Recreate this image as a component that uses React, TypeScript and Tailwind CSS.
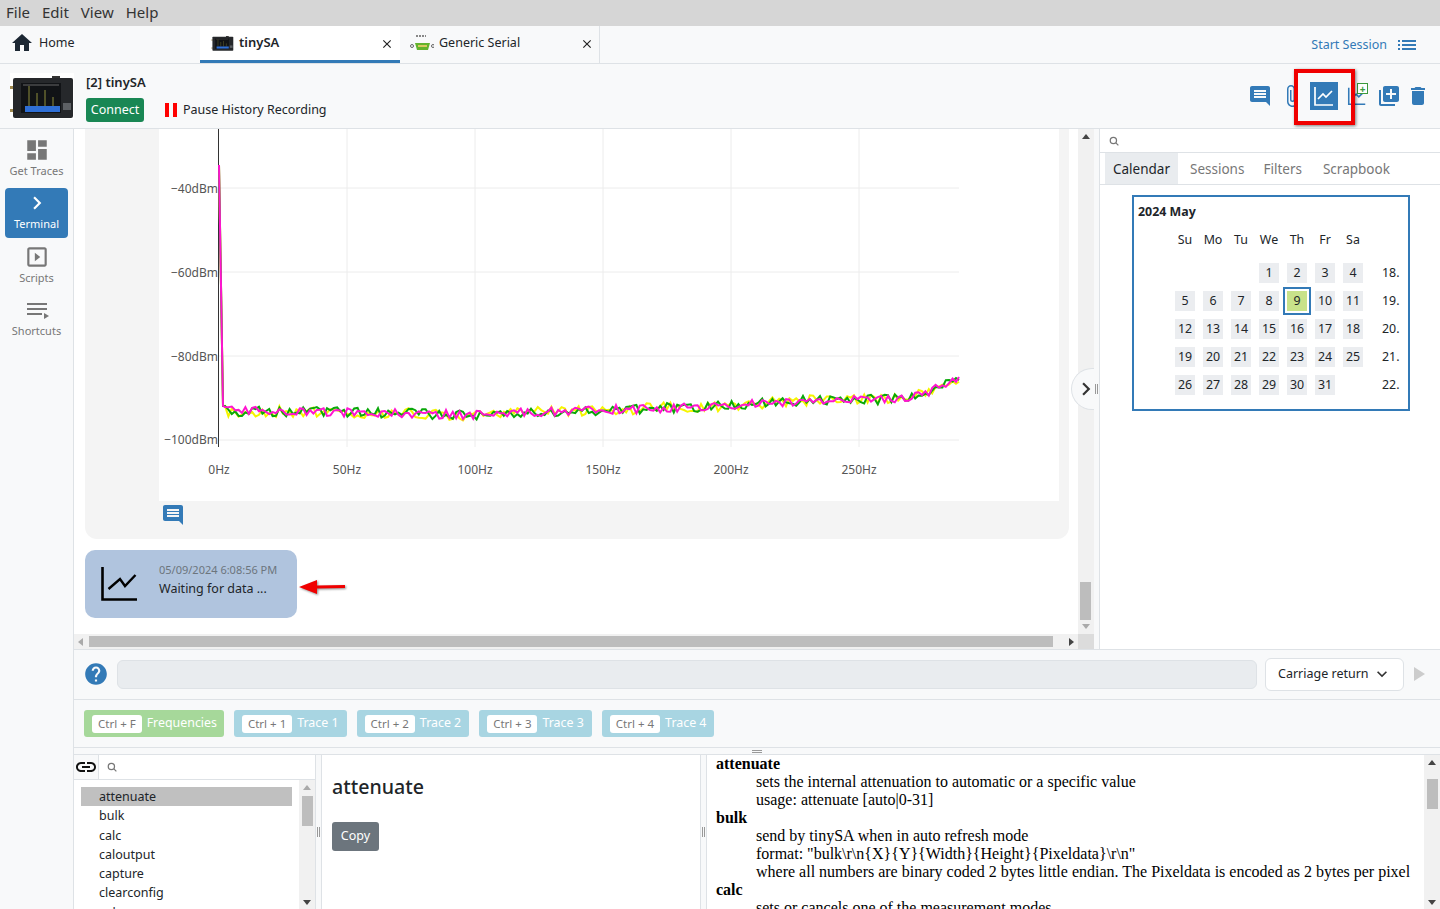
import {
  MdHome,
  MdInsertComment,
  MdAttachFile,
  MdLibraryAdd,
  MdDelete,
  MdDashboard,
  MdChevronRight,
  MdSlideshow,
  MdLink,
  MdHelp,
  MdList,
  MdKeyboardArrowDown,
  MdClose,
} from "react-icons/md";

// seeded noise so the traces come out the same on every load
const noise = (seed: number) => {
  let s = seed;
  return () => {
    s = (s * 16807) % 2147483647;
    return s / 2147483647 - 0.5;
  };
};

const baseline: [number, number][] = [
  [65, 282], [180, 283], [310, 286], [440, 281], [540, 278], [640, 272], [740, 270], [770, 263], [785, 256], [800, 251],
];

const baseAt = (x: number) => {
  for (let i = 0; i < baseline.length - 1; i++) {
    const [x0, y0] = baseline[i];
    const [x1, y1] = baseline[i + 1];
    if (x <= x1) return y0 + ((y1 - y0) * (x - x0)) / (x1 - x0);
  }
  return baseline[baseline.length - 1][1];
};

const trace = (seed: number, amp: number) => {
  const rnd = noise(seed);
  const pts: string[] = ["60,36", "64,277"];
  for (let x = 66; x <= 800; x += 3.4) {
    pts.push(`${x.toFixed(1)},${(baseAt(x) + rnd() * amp).toFixed(1)}`);
  }
  pts.push(`800,${(251 + rnd() * amp).toFixed(1)}`);
  return pts.join(" ");
};

const Device = ({ className }: { className: string }) => (
  <svg viewBox="0 0 64 46" className={className}>
    <rect x="0" y="0" width="64" height="46" fill="#fff" />
    <rect x="0" y="13" width="4" height="3" fill="#a08a50" />
    <rect x="0" y="36" width="4" height="3" fill="#a08a50" />
    <rect x="42" y="3" width="8" height="3" fill="#333" />
    <rect x="3" y="5" width="60" height="40" rx="2" fill="#26282b" />
    <rect x="11" y="10" width="40" height="30" fill="#111316" />
    <path d="M13 12h36" stroke="#666" strokeWidth="1" />
    <path d="M19 13v20M27 20v13M35 17v16M43 24v9" stroke="#8f8f3c" strokeWidth="1" />
    <rect x="15" y="33" width="35" height="6" fill="#2f6fd6" />
    <rect x="53" y="30" width="8" height="7" fill="#5d6064" />
  </svg>
);

const SerialIcon = () => (
  <svg viewBox="0 0 24 16" className="h-[16px] w-[24px]">
    <path d="M6 1h10" stroke="#888" strokeWidth="2" strokeDasharray="2 1" />
    <path d="M5 8h15l-2 7H7z" fill="#62b32c" />
    <rect x="8" y="10" width="9" height="2" fill="#d8c860" />
    <circle cx="2" cy="11" r="1.5" fill="none" stroke="#666" />
    <circle cx="23" cy="11" r="1.5" fill="none" stroke="#666" />
  </svg>
);

const ChartGlyph = ({ className, stroke }: { className: string; stroke: string }) => (
  <svg viewBox="0 0 24 24" className={className} fill="none" stroke={stroke} strokeWidth="1.7">
    <path d="M3 3v18h18" />
    <path d="M6 15l5-5 3 3 6-6" />
  </svg>
);

const ShortcutsGlyph = () => (
  <svg viewBox="0 0 26 26" className="h-[26px] w-[26px]" fill="#777">
    <rect x="3" y="6" width="20" height="2" />
    <rect x="3" y="11" width="20" height="2" />
    <rect x="3" y="16" width="15" height="2" />
    <path d="M20 16l5 3-5 3z" />
  </svg>
);

const SearchGlyph = () => (
  <svg viewBox="0 0 16 16" className="h-[10px] w-[10px]" fill="none" stroke="#777" strokeWidth="2">
    <circle cx="7" cy="7" r="5" />
    <path d="M11 11l4 4" />
  </svg>
);

const sideItems = [
  { label: "Get Traces", icon: <MdDashboard size={26} /> },
  { label: "Terminal", icon: <MdChevronRight size={26} />, active: true },
  { label: "Scripts", icon: <MdSlideshow size={26} /> },
  { label: "Shortcuts", icon: <ShortcutsGlyph /> },
];

const shortcuts = [
  { keys: "Ctrl + F", label: "Frequencies", green: true },
  { keys: "Ctrl + 1", label: "Trace 1" },
  { keys: "Ctrl + 2", label: "Trace 2" },
  { keys: "Ctrl + 3", label: "Trace 3" },
  { keys: "Ctrl + 4", label: "Trace 4" },
];

const commands = ["attenuate", "bulk", "calc", "caloutput", "capture", "clearconfig", "color"];

const weeks: { days: (number | null)[]; week: string }[] = [
  { days: [null, null, null, 1, 2, 3, 4], week: "18." },
  { days: [5, 6, 7, 8, 9, 10, 11], week: "19." },
  { days: [12, 13, 14, 15, 16, 17, 18], week: "20." },
  { days: [19, 20, 21, 22, 23, 24, 25], week: "21." },
  { days: [26, 27, 28, 29, 30, 31, null], week: "22." },
];

const Chart = () => (
  <svg width="900" height="372" className="block">
    {[59, 143, 227, 311].map((y) => (
      <line key={y} x1="60" x2="800" y1={y} y2={y} stroke="#ececec" />
    ))}
    {[188, 316, 444, 572, 700].map((x) => (
      <line key={x} x1={x} x2={x} y1="0" y2="318" stroke="#ececec" />
    ))}
    <line x1="59.5" x2="59.5" y1="0" y2="318" stroke="#333" />
    {[
      ["−40dBm", 64],
      ["−60dBm", 148],
      ["−80dBm", 232],
      ["−100dBm", 315],
    ].map(([t, y]) => (
      <text key={t} x="59" y={y} textAnchor="end" fontSize="12" fill="#555">
        {t}
      </text>
    ))}
    {[
      ["0Hz", 60],
      ["50Hz", 188],
      ["100Hz", 316],
      ["150Hz", 444],
      ["200Hz", 572],
      ["250Hz", 700],
    ].map(([t, x]) => (
      <text key={t} x={x} y="345" textAnchor="middle" fontSize="12" fill="#555">
        {t}
      </text>
    ))}
    <polyline points={trace(4242, 11)} fill="none" stroke="#f5f500" strokeWidth="2" />
    <polyline points={trace(991, 10)} fill="none" stroke="#0aa80a" strokeWidth="2" />
    <polyline points={trace(7717, 9)} fill="none" stroke="#ff14d0" strokeWidth="2" />
  </svg>
);

export default function App() {
  return (
    <div className="relative flex h-[909px] w-[1440px] flex-col overflow-hidden bg-white font-['Noto_Sans',sans-serif] text-[12.5px] text-[#212529]">
      {/* menu */}
      <div className="flex h-[26px] items-center gap-[12px] bg-[#d6d6d6] pb-[2px] pl-[6px] text-[15px] text-[#333]">
        <span>File</span>
        <span>Edit</span>
        <span>View</span>
        <span>Help</span>
      </div>

      {/* tabs */}
      <div className="flex h-[38px] border-b border-[#dee2e6] bg-[#f8f9fa]">
        <div className="flex w-[200px] items-center gap-[5px] pb-[3px] pl-[10px]">
          <MdHome size={24} className="text-[#1c2733]" />
          <span>Home</span>
        </div>
        <div className="relative flex w-[200px] items-center gap-[5px] border-b-[3px] border-[#337ab7] bg-white pb-[1px] pl-[11px]">
          <Device className="h-[16px] w-[23px]" />
          <span className="text-[13px] font-semibold">tinySA</span>
          <MdClose size={14} className="absolute right-[6px] bottom-[9px] text-[#222]" />
        </div>
        <div className="relative flex w-[200px] items-center gap-[5px] border-r border-[#dee2e6] pb-[3px] pl-[10px]">
          <SerialIcon />
          <span>Generic Serial</span>
          <MdClose size={14} className="absolute right-[5px] bottom-[12px] text-[#222]" />
        </div>
        <div className="flex flex-1 items-center justify-end gap-[8px] pt-[1px] pr-[21px] text-[#337ab7]">
          <span>Start Session</span>
          <MdList size={24} />
        </div>
      </div>

      {/* device header */}
      <div className="relative flex h-[65px] items-center border-b border-[#dee2e6] bg-[#f8f9fa] pl-[10px]">
        <Device className="h-[46px] w-[64px]" />
        <div className="ml-[12px] flex flex-col gap-[7px] pt-[3px]">
          <span className="text-[13px] leading-[18px] font-semibold">[2] tinySA</span>
          <div className="flex items-center">
            <span className="flex h-[24px] w-[58px] items-center justify-center rounded-[3px] bg-[#198754] text-white">Connect</span>
            <span className="mr-[6px] ml-[21px] h-[14px] w-[12px] border-x-[4px] border-[#ff0000]" />
            <span>Pause History Recording</span>
          </div>
        </div>
        <div className="ml-auto flex items-center pr-[10px] text-[#337ab7]">
          <MdInsertComment size={24} className="mr-[8px]" />
          <MdAttachFile size={24} className="mr-[6px]" />
          <div className="mr-[8px] flex h-[28px] w-[28px] items-center justify-center bg-[#337ab7]">
            <ChartGlyph className="h-[24px] w-[24px]" stroke="#fff" />
          </div>
          <div className="relative mr-[9px] h-[22px] w-[22px]">
            <ChartGlyph className="h-[22px] w-[22px]" stroke="#337ab7" />
            <span className="absolute top-[-2px] right-[0px] flex h-[11px] w-[11px] items-center justify-center border border-[#3c9a3c] bg-white text-[10px] leading-none font-bold text-[#3c9a3c]">+</span>
          </div>
          <MdLibraryAdd size={24} className="mr-[5px]" />
          <MdDelete size={24} />
        </div>
        {/* annotation from the screenshot */}
        <div className="absolute top-[5px] left-[1294px] h-[56px] w-[61px] border-[4px] border-[#f00000] shadow-[1px_1px_3px_rgba(0,0,0,0.5)]" />
      </div>

      <div className="flex min-h-0 flex-1">
        {/* sidebar */}
        <div className="flex w-[74px] flex-col items-center gap-[3.6px] border-r border-[#dee2e6] bg-[#f8f9fa] px-[5px] pt-[5px]">
          {sideItems.map((item) => (
            <div
              key={item.label}
              className={
                item.active
                  ? "flex h-[50px] w-[63px] flex-col items-center justify-center rounded-[4px] bg-[#337ab7] pb-[4px] text-[11px] text-white"
                  : "flex h-[50px] w-[63px] flex-col items-center justify-center pb-[4px] text-[11px] text-[#777]"
              }
            >
              {item.icon}
              <span className="leading-[15px]">{item.label}</span>
            </div>
          ))}
        </div>

        <div className="flex min-w-0 flex-1 flex-col">
          {/* chat + right panel */}
          <div className="relative flex h-[521px] border-b border-[#dee2e6]">
            <div className="relative flex w-[1020px] flex-col bg-white">
              <div className="flex min-h-0 flex-1">
                <div className="min-w-0 flex-1 overflow-hidden pl-[11px]">
                  <div className="h-[410px] w-[984px] rounded-b-[12px] bg-[#f4f4f4] pr-[10px] pl-[74px]">
                    <div className="bg-white">
                      <Chart />
                    </div>
                    <MdInsertComment size={24} className="mt-[2px] ml-[2px] text-[#337ab7]" />
                  </div>
                  <div className="mt-[11px] flex h-[68px] w-[212px] items-center gap-[22px] rounded-[10px] bg-[#b0c4de] pl-[16px]">
                    <svg viewBox="0 0 36 34" className="h-[34px] w-[36px] shrink-0" fill="none" stroke="#000">
                      <path d="M1.5 0v32.500H36" strokeWidth="2.6" />
                      <path d="M7.5 22l11.500-10 5 7 10.500-11" strokeWidth="2.4" />
                    </svg>
                    <div className="flex flex-col pb-[8px]">
                      <span className="text-[11px] leading-[18px] text-[#6c757d]">05/09/2024 6:08:56 PM</span>
                      <span className="leading-[20px]">Waiting for data ...</span>
                    </div>
                  </div>
                </div>
                {/* vertical scrollbar */}
                <div className="flex w-[16px] flex-col items-center bg-[#f1f1f1] pr-[1px]">
                  <span className="mt-[5px] h-0 w-0 border-x-[4px] border-b-[5px] border-x-transparent border-b-[#444]" />
                  <div className="mt-[443px] h-[38px] w-[11px] bg-[#bdbdbd]" />
                  <span className="mt-[4px] h-0 w-0 border-x-[4px] border-t-[5px] border-x-transparent border-t-[#aaa]" />
                </div>
              </div>
              {/* horizontal scrollbar */}
              <div className="flex h-[15px] items-center bg-[#f1f1f1]">
                <span className="ml-[4px] h-0 w-0 border-y-[4px] border-r-[5px] border-y-transparent border-r-[#aaa]" />
                <div className="ml-[6px] h-[11px] w-[964px] bg-[#bdbdbd]" />
                <span className="ml-[16px] h-0 w-0 border-y-[4px] border-l-[5px] border-y-transparent border-l-[#444]" />
                <div className="ml-auto h-full w-[16px] bg-[#dcdcdc]" />
              </div>
            </div>

            {/* splitter */}
            <div className="flex w-[6px] items-center justify-center border-r border-[#dee2e6] bg-[#f8f9fa]">
              <span className="h-[10px] w-[3px] border-x border-[#999]" />
            </div>

            {/* collapse handle */}
            <div className="absolute top-[239px] left-[997px] flex h-[42px] w-[23px] items-center justify-end rounded-l-full border border-r-0 border-[#dee2e6] bg-[#f8f9fa]">
              <MdChevronRight size={26} className="mr-[-5px] text-[#333]" />
            </div>

            {/* right panel */}
            <div className="flex min-w-0 flex-1 flex-col bg-white">
              <div className="flex h-[24px] items-center border-b border-[#dee2e6] pl-[9px]">
                <SearchGlyph />
              </div>
              <div className="flex h-[32px] items-stretch border-b border-[#dee2e6] pl-[5px] text-[13.5px] text-[#777]">
                <span className="flex w-[73px] items-center justify-center bg-[#e9ecef] pt-[1px] text-[#212529]">Calendar</span>
                <span className="flex items-center pt-[1px] pl-[12px]">Sessions</span>
                <span className="flex items-center pt-[1px] pl-[19px]">Filters</span>
                <span className="flex items-center pt-[1px] pl-[21px]">Scrapbook</span>
              </div>
              <div className="mt-[10px] ml-[32px] h-[216px] w-[278px] border-2 border-[#337ab7] px-[4px] pt-[6px] text-[12.4px]">
                <div className="leading-[17px] font-bold">2024 May</div>
                <div className="mt-[11px] ml-[33px] grid grid-cols-[repeat(7,28px)] justify-items-center leading-[17px]">
                  {["Su", "Mo", "Tu", "We", "Th", "Fr", "Sa"].map((d) => (
                    <span key={d}>{d}</span>
                  ))}
                </div>
                <div className="mt-[11px] ml-[33px] flex flex-col">
                  {weeks.map((w) => (
                    <div key={w.week} className="flex h-[28px] items-center">
                      <div className="grid grid-cols-[repeat(7,28px)] items-center justify-items-center">
                        {w.days.map((d, i) =>
                          d === null ? (
                            <span key={i} />
                          ) : d === 9 ? (
                            <span key={i} className="flex h-[28px] w-[28px] items-center justify-center border-2 border-[#337ab7]">
                              <span className="flex h-[20px] w-[20px] items-center justify-center bg-[#c8e28a]">{d}</span>
                            </span>
                          ) : (
                            <span key={i} className="flex h-[20px] w-[20px] items-center justify-center bg-[#ebedf0]">{d}</span>
                          )
                        )}
                      </div>
                      <span className="ml-[15px]">{w.week}</span>
                    </div>
                  ))}
                </div>
              </div>
            </div>
          </div>

          {/* input row */}
          <div className="flex h-[50px] items-center border-b border-[#dee2e6] bg-[#f8f9fa] pb-[1px] pl-[9px]">
            <MdHelp size={26} className="text-[#337ab7]" />
            <div className="ml-[8px] h-[29px] w-[1140px] rounded-[6px] border border-[#dee2e6] bg-[#e9ecef]" />
            <div className="ml-[8px] flex h-[33px] w-[139px] items-center justify-between rounded-[6px] border border-[#dee2e6] bg-white pr-[11px] pl-[12px]">
              <span className="whitespace-nowrap">Carriage return</span>
              <MdKeyboardArrowDown size={20} className="shrink-0 text-[#333]" />
            </div>
            <span className="ml-[10px] h-0 w-0 border-y-[7px] border-l-[11px] border-y-transparent border-l-[#ccc]" />
          </div>

          {/* shortcuts */}
          <div className="flex h-[48px] items-center gap-[10px] border-b border-[#dee2e6] bg-[#f8f9fa] pl-[10px]">
            {shortcuts.map((s) => (
              <div
                key={s.keys}
                className={
                  s.green
                    ? "flex h-[27px] items-center gap-[5px] rounded-[3px] bg-[#a6d89a] pr-[7px] pl-[8px] text-[12.4px] text-white"
                    : "flex h-[27px] items-center gap-[5px] rounded-[3px] bg-[#a8d5e2] pr-[8px] pl-[8px] text-[12.4px] text-white"
                }
              >
                <span className="flex h-[18px] items-center rounded-[3px] bg-white px-[6px] text-[11.5px] text-[#777]">{s.keys}</span>
                <span>{s.label}</span>
              </div>
            ))}
          </div>

          {/* splitter */}
          <div className="flex h-[7px] items-center justify-center border-b border-[#dee2e6] bg-[#f8f9fa]">
            <span className="h-[3px] w-[10px] border-y border-[#999]" />
          </div>

          {/* help panes */}
          <div className="flex min-h-0 flex-1 overflow-hidden">
            <div className="flex w-[241px] flex-col">
              <div className="flex h-[25px] border-b border-[#dee2e6]">
                <div className="flex w-[25px] items-center justify-center border-r border-[#dee2e6] bg-[#f8f9fa]">
                  <MdLink size={24} className="text-[#111]" />
                </div>
                <div className="flex items-center pl-[8px]">
                  <SearchGlyph />
                </div>
              </div>
              <div className="flex min-h-0 flex-1">
                <div className="min-w-0 flex-1 overflow-hidden pt-[7px] pl-[7px]">
                  {commands.map((c) => (
                    <div
                      key={c}
                      className={c === "attenuate" ? "h-[19.3px] w-[211px] bg-[#c0c0c0] pl-[18px] leading-[19px]" : "h-[19.3px] w-[211px] pl-[18px] leading-[19px]"}
                    >
                      {c}
                    </div>
                  ))}
                </div>
                <div className="flex w-[16px] flex-col items-center bg-[#f1f1f1]">
                  <span className="mt-[5px] h-0 w-0 border-x-[4px] border-b-[5px] border-x-transparent border-b-[#aaa]" />
                  <div className="mt-[6px] h-[30px] w-[11px] bg-[#bdbdbd]" />
                  <span className="mt-auto mb-[4px] h-0 w-0 border-x-[4px] border-t-[5px] border-x-transparent border-t-[#444]" />
                </div>
              </div>
            </div>
            <div className="flex w-[7px] items-center justify-center border-r border-l border-[#dee2e6] bg-[#f8f9fa]">
              <span className="h-[10px] w-[3px] border-x border-[#999]" />
            </div>
            <div className="w-[378px] pl-[10px]">
              <div className="mt-[18px] text-[19.6px] leading-[28px] font-medium">attenuate</div>
              <div className="mt-[21px] flex h-[29px] w-[47px] items-center justify-center rounded-[3px] bg-[#6c757d] text-white">Copy</div>
            </div>
            <div className="flex w-[7px] items-center justify-center border-r border-l border-[#dee2e6] bg-[#f8f9fa]">
              <span className="h-[10px] w-[3px] border-x border-[#999]" />
            </div>
            <div className="min-w-0 flex-1 overflow-hidden pl-[9px] font-['Liberation_Serif',serif] text-[16px] leading-[18px] text-black">
              <div className="font-bold">attenuate</div>
              <div className="ml-[40px]">
                sets the internal attenuation to automatic or a specific value
                <br />
                usage: attenuate [auto|0-31]
              </div>
              <div className="font-bold">bulk</div>
              <div className="ml-[40px] whitespace-nowrap">
                send by tinySA when in auto refresh mode
                <br />
                {'format: "bulk\\r\\n{X}{Y}{Width}{Height}{Pixeldata}\\r\\n"'}
                <br />
                where all numbers are binary coded 2 bytes little endian. The Pixeldata is encoded as 2 bytes per pixel
              </div>
              <div className="font-bold">calc</div>
              <div className="ml-[40px]">sets or cancels one of the measurement modes</div>
            </div>
            <div className="flex w-[16px] flex-col items-center bg-[#f1f1f1]">
              <span className="mt-[5px] h-0 w-0 border-x-[4px] border-b-[5px] border-x-transparent border-b-[#444]" />
              <div className="mt-[14px] h-[30px] w-[11px] bg-[#bdbdbd]" />
              <span className="mt-auto mb-[4px] h-0 w-0 border-x-[4px] border-t-[5px] border-x-transparent border-t-[#444]" />
            </div>
          </div>
        </div>
      </div>

      {/* red annotation arrow */}
      <svg className="absolute top-[577px] left-[296px] h-[20px] w-[52px] drop-shadow-[1px_1px_1px_rgba(0,0,0,0.45)]" viewBox="0 0 52 20">
        <path d="M3 10l18-7v5.500l28-.5v3l-28 .5v5.500z" fill="#f00000" />
      </svg>
    </div>
  );
}
